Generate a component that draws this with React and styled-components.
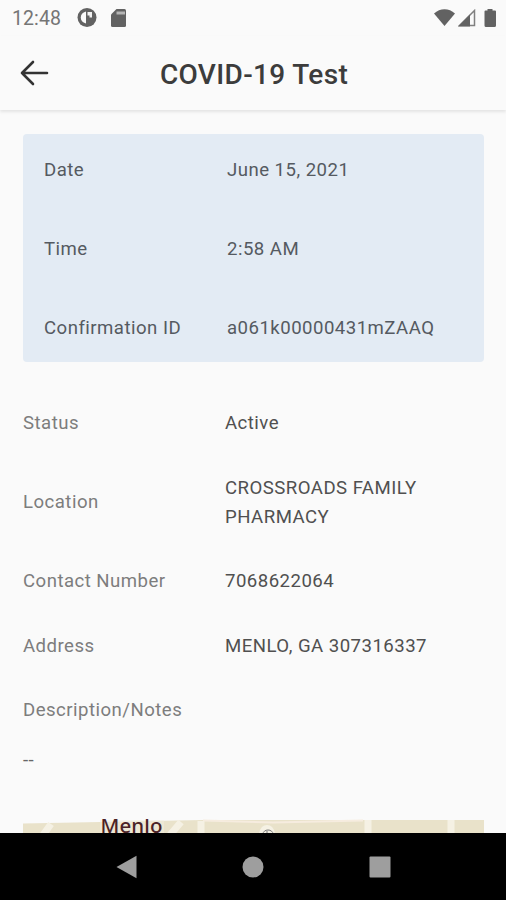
import React from 'react'
import styled, { createGlobalStyle } from 'styled-components'

const GlobalStyle = createGlobalStyle`
  * {
    box-sizing: border-box;
  }

  body {
    margin: 0;
    background: #fafafa;
    font-family: Roboto, sans-serif;
  }
`

const Screen = styled.div`
  width: 506px;
  height: 900px;
  display: flex;
  flex-direction: column;
  overflow: hidden;
  background: #fafafa;
`

const StatusBar = styled.div`
  height: 36px;
  flex-shrink: 0;
  display: flex;
  align-items: center;
  padding: 0 9px 0 12px;
  color: #757575;

  svg {
    display: block;
  }
`

const Clock = styled.span`
  width: 65px;
  font-size: 19.5px;
  letter-spacing: 0.1px;
`

const StatusIcons = styled.div`
  display: flex;
  align-items: center;
  gap: ${({ $gap }) => $gap};
  margin-left: ${({ $end }) => ($end ? 'auto' : '0')};
`

const Header = styled.header`
  height: 74px;
  flex-shrink: 0;
  display: grid;
  grid-template-columns: 60px 1fr 60px;
  align-items: center;
  box-shadow: 0 2px 3px rgba(0, 0, 0, 0.09);
`

const BackButton = styled.button`
  border: 0;
  padding: 0 0 0 20px;
  background: none;

  svg {
    display: block;
  }
`

const Title = styled.h1`
  margin: 0;
  padding: 3px 0 0 2px;
  font-size: 28px;
  font-weight: 500;
  letter-spacing: 0.35px;
  line-height: 32px;
  text-align: center;
  color: #3c3c3c;
`

const Content = styled.main`
  flex: 1;
  min-height: 0;
  overflow: hidden;
  padding: 23.5px 22px 0 23px;
`

const Summary = styled.section`
  height: 228px;
  display: flex;
  flex-direction: column;
  gap: 50px;
  padding: 22.5px 21px 0;
  border-radius: 4px;
  background: #e3ebf4;
`

const Details = styled.section`
  display: flex;
  flex-direction: column;
  gap: 35.6px;
  padding-top: 47.5px;
`

const Row = styled.div`
  display: grid;
  grid-template-columns: ${({ $label }) => $label} 1fr;
  align-items: center;
  font-size: 18.6px;
  line-height: 29px;
  letter-spacing: 0.47px;
`

const Label = styled.span`
  color: ${({ $strong }) => ($strong ? '#555a61' : '#7d7d7d')};
`

const Value = styled.span`
  color: ${({ $strong }) => ($strong ? '#555a61' : '#505050')};
`

const Notes = styled.p`
  margin: 20.6px 0 45.2px;
  font-size: 18.6px;
  line-height: 29px;
  letter-spacing: 0.47px;
  color: #666;
`

const MapPreview = styled.svg`
  display: block;
  width: 461px;
  height: 15px;
  overflow: visible;
`

const NavBar = styled.nav`
  position: relative;
  height: 67px;
  flex-shrink: 0;
  display: grid;
  grid-template-columns: repeat(3, 127px);
  justify-content: center;
  align-items: center;
  justify-items: center;
  background: #000;

  svg {
    display: block;
  }
`

const summary = [
  ['Date', 'June 15, 2021'],
  ['Time', '2:58 AM'],
  ['Confirmation ID', 'a061k00000431mZAAQ'],
]

const details = [
  ['Status', 'Active'],
  ['Location', 'CROSSROADS FAMILY PHARMACY'],
  ['Contact Number', '7068622064'],
  ['Address', 'MENLO, GA 307316337'],
  ['Description/Notes', ''],
]

function SystemStatus() {
  return (
    <StatusBar>
      <Clock>12:48</Clock>
      <StatusIcons $gap="14px">
        <svg width="20" height="20" viewBox="0 0 20 20">
          <circle cx="10" cy="9.500" r="9.500" fill="#626262" />
          <path d="M9 3.500v12C5.300 14.500 3.800 12.500 3.800 9.500s1.500-5 5.200-6z" fill="#fafafa" />
          <path d="M10.500 4h4.500v5.500h-2.500V7.500h-2z" fill="#f2f2f2" />
        </svg>
        <svg width="15" height="19" viewBox="0 0 15 19">
          <path d="M5.500 0h8A1.500 1.500 0 0 1 15 1.500v15a1.500 1.500 0 0 1-1.500 1.500h-12A1.500 1.500 0 0 1 0 16.500V5.500z" fill="#626262" />
          <path d="M5.500 2.500h8.500v3H5.500z" fill="#b5b5b5" />
        </svg>
      </StatusIcons>
      <StatusIcons $gap="3px" $end>
        <svg width="21" height="18" viewBox="0 0 21 18">
          <path d="M0 4.500C6-1.200 15-1.200 21 4.500L10.500 17z" fill="#626262" />
        </svg>
        <svg width="18" height="18" viewBox="0 0 18 18">
          <path d="M16.500 1.500v15H1.500z" fill="#fafafa" stroke="#808080" strokeWidth="1.500" />
          <path d="M12 5.500v12H0z" fill="#626262" />
        </svg>
        <svg width="18" height="19" viewBox="0 0 18 19">
          <path d="M8.500 0h5v1.500h2.500a1 1 0 0 1 1 1V16.500a1.500 1.500 0 0 1-1.500 1.500H7A1.500 1.500 0 0 1 5.500 16.500V2.500a1 1 0 0 1 1-1h2z" fill="#626262" />
        </svg>
      </StatusIcons>
    </StatusBar>
  )
}

export default function App() {
  return (
    <Screen>
      <GlobalStyle />
      <SystemStatus />
      <Header>
        <BackButton aria-label="Back">
          <svg width="29" height="26" viewBox="0 0 29 26" fill="none" stroke="#333" strokeWidth="2.600" strokeLinecap="round" strokeLinejoin="round">
            <path d="M27 13H2M13 2L2 13l11 11" />
          </svg>
        </BackButton>
        <Title>COVID-19 Test</Title>
      </Header>
      <Content>
        <Summary>
          {summary.map(([label, value]) => (
            <Row key={label} $label="183px">
              <Label $strong>{label}</Label>
              <Value $strong>{value}</Value>
            </Row>
          ))}
        </Summary>
        <Details>
          {details.map(([label, value]) => (
            <Row key={label} $label="202px">
              <Label>{label}</Label>
              <Value>{value}</Value>
            </Row>
          ))}
        </Details>
        <Notes>--</Notes>
        <MapPreview viewBox="0 0 461 15">
          <path d="M0 3.500L180 0H461V15H0z" fill="#e9e2ca" />
          <path d="M180 .5L250 2.500L340 .5" stroke="#f6ecdf" strokeWidth="2" fill="none" />
          <path d="M20 15L28 4M147 15L158 2M178 1V15M345 0V15M428 0V15" stroke="#f5f1e4" strokeWidth="7" fill="none" />
          <path d="M236 15q1-10 8-10t8 10z" fill="#f5f1e4" />
          <rect x="77" width="64" height="15" fill="#f2eddf" opacity=".5" />
          <text x="77.500" y="12.500" textLength="62" fontFamily="Noto Sans, sans-serif" fontSize="20.500" fontWeight="500" fill="#4b2226">Menlo</text>
          <path d="M76-6H142V-1H76z" fill="#fafafa" />
          <path d="M240 14a5 4 0 0 1 10 0M244 11v3" stroke="#777" fill="none" />
        </MapPreview>
      </Content>
      <NavBar>
        <svg width="21" height="24" viewBox="0 0 21 24">
          <path d="M20.500.8v22.400L.5 12z" fill="#9e9e9e" />
        </svg>
        <svg width="22" height="22" viewBox="0 0 22 22">
          <circle cx="11" cy="11" r="10.500" fill="#9e9e9e" />
        </svg>
        <svg width="22" height="22" viewBox="0 0 22 22">
          <rect x=".5" y=".5" width="21" height="21" rx="1" fill="#9e9e9e" />
        </svg>
      </NavBar>
    </Screen>
  )
}
